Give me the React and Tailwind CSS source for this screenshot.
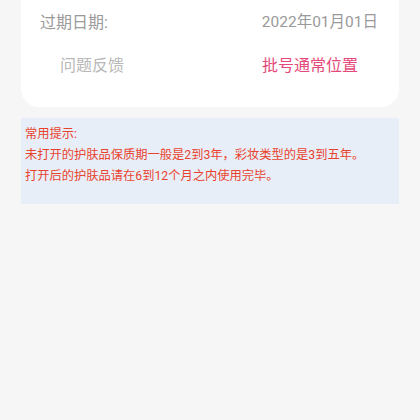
export default function App() {
  return (
    <div
      className="w-[420px] h-[420px] bg-[#f6f6f6] px-[21px]"
      style={{ fontFamily: 'Roboto, "Noto Sans CJK SC", sans-serif' }}
    >
      {/* card */}
      <div className="bg-white rounded-b-[18px] pb-[21px]">
        <div className="flex h-[45px] items-center justify-between pl-[19px] pr-[21px] text-[16px] text-[#9a9a9a]">
          <span>过期日期:</span>
          <span className="text-[15.5px]">2022年01月01日</span>
        </div>
        <div className="flex h-[41px] items-center justify-between pl-[39px] pr-[41px] text-[16px]">
          <span className="text-[#b8b8b8]">问题反馈</span>
          <span className="text-[#e4497a]">批号通常位置</span>
        </div>
      </div>

      {/* tips */}
      <div className="mt-[11px] bg-[#e8eef7] pl-[4px] pt-[6px] pb-[17px] text-[12.25px] leading-[21px] text-[#e8432f]">
        <p>常用提示:</p>
        <p>未打开的护肤品保质期一般是2到3年，彩妆类型的是3到五年。</p>
        <p>打开后的护肤品请在6到12个月之内使用完毕。</p>
      </div>
    </div>
  );
}
